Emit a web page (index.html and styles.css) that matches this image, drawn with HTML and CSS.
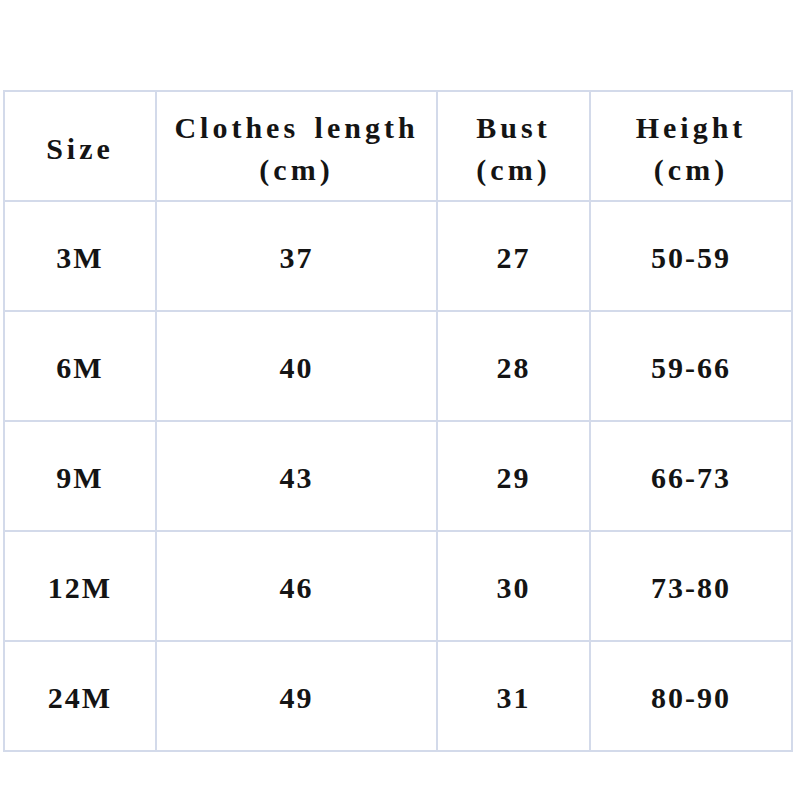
FILE: index.html
```html
<!DOCTYPE html>
<html>
<head>
<meta charset="utf-8">
<link rel="stylesheet" href="styles.css">
</head>
<body>
<table class="size-table">
  <colgroup>
    <col class="c1"><col class="c2"><col class="c3"><col class="c4">
  </colgroup>
  <thead>
    <tr>
      <th>Size</th>
      <th>Clothes length<br>(cm)</th>
      <th>Bust<br>(cm)</th>
      <th>Height<br>(cm)</th>
    </tr>
  </thead>
  <tbody>
    <tr><td>3M</td><td>37</td><td>27</td><td>50-59</td></tr>
    <tr><td>6M</td><td>40</td><td>28</td><td>59-66</td></tr>
    <tr><td>9M</td><td>43</td><td>29</td><td>66-73</td></tr>
    <tr><td>12M</td><td>46</td><td>30</td><td>73-80</td></tr>
    <tr><td>24M</td><td>49</td><td>31</td><td>80-90</td></tr>
  </tbody>
</table>
</body>
</html>
```
FILE: styles.css
```css
html, body {
  margin: 0;
  padding: 0;
  background: #ffffff;
}
body {
  padding-top: 90px;
  padding-left: 3px;
}
.size-table {
  border-collapse: collapse;
  table-layout: fixed;
  width: 788px;
  font-family: "Liberation Serif", "Times New Roman", serif;
  font-weight: bold;
  color: #141414;
}
.c1 { width: 152px; }
.c2 { width: 281px; }
.c3 { width: 153px; }
.c4 { width: 202px; }
.size-table th,
.size-table td {
  border: 2px solid #d3daea;
  padding: 0;
  text-align: center;
  vertical-align: middle;
}
.size-table th {
  height: 102px;
  font-size: 30px;
  letter-spacing: 4px;
  word-spacing: 4px;
  line-height: 42px;
  font-weight: bold;
  padding-top: 6px;
}
.size-table td {
  height: 104px;
  font-size: 30px;
  letter-spacing: 2px;
  line-height: 40px;
  padding-top: 4px;
}
```
